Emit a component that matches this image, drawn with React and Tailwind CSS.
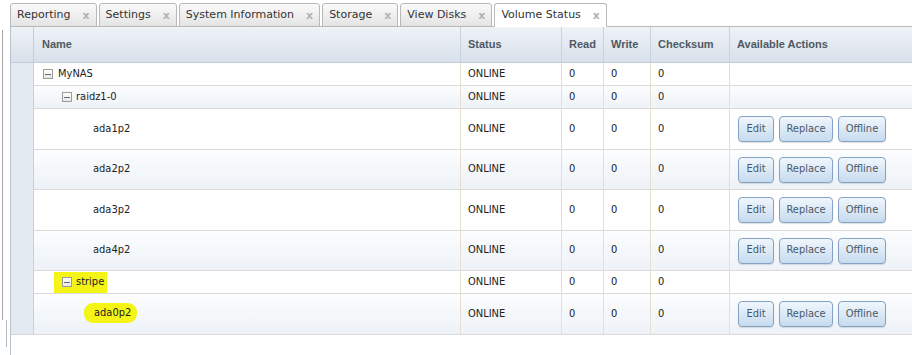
import React from 'react';

const TABS = ['Reporting', 'Settings', 'System Information', 'Storage', 'View Disks', 'Volume Status'];

const BODY_FONT = { fontFamily: '"DejaVu Sans Condensed", "Liberation Sans", sans-serif' };

// h = row height, level = tree depth, group = has expander
const ROWS = [
  { name: 'MyNAS', level: 0, group: true, h: 'h-[23px]' },
  { name: 'raidz1-0', level: 1, group: true, h: 'h-[23px]' },
  { name: 'ada1p2', level: 2, h: 'h-[41px]', actions: true },
  { name: 'ada2p2', level: 2, h: 'h-[40px]', actions: true },
  { name: 'ada3p2', level: 2, h: 'h-[41px]', actions: true },
  { name: 'ada4p2', level: 2, h: 'h-[40px]', actions: true },
  { name: 'stripe', level: 1, group: true, h: 'h-[23px]', mark: 'box' },
  { name: 'ada0p2', level: 2, h: 'h-[41px]', actions: true, mark: 'blob' },
];

const COLS = 'grid grid-cols-[23px_427px_101px_42px_47px_79px_1fr]';

function Tab({ label, active }) {
  return (
    <div
      className={`flex items-center h-[24px] -mb-px pl-[6px] pr-[6px] border border-[#b8b8b8] rounded-t-[3px] ${
        active ? 'bg-white border-b-white' : 'bg-linear-to-b from-[#fafafa] to-[#e4e4e4]'
      }`}
    >
      <span className="text-[11px] text-[#333]" style={{ fontFamily: '"DejaVu Sans", Verdana, sans-serif' }}>
        {label}
      </span>
      <span className="ml-[12px] text-[11px] font-bold leading-none text-[#b3b3b3]" style={{ fontFamily: '"DejaVu Sans", sans-serif' }}>
        x
      </span>
    </div>
  );
}

function Expander() {
  return (
    <span className="w-[10px] h-[10px] shrink-0 border border-[#9c9c9c] bg-linear-to-b from-white to-[#e6e6e6] flex items-center justify-center">
      <span className="w-[6px] h-px bg-[#6a6a6a]" />
    </span>
  );
}

function NameCell({ row }) {
  if (row.mark === 'box') {
    return (
      <span className="ml-[20px] pl-[8px] pr-[3px] h-[21px] bg-[#f4f416] flex items-center gap-[4px]">
        <Expander />
        <span>{row.name}</span>
      </span>
    );
  }
  if (row.mark === 'blob') {
    return (
      <span className="ml-[50px] pl-[10px] pr-[6px] h-[20px] mt-[-2px] rounded-[9px] bg-[#f4f416] flex items-center">
        {row.name}
      </span>
    );
  }
  if (row.group) {
    return (
      <span className={`flex items-center ${row.level === 0 ? 'pl-[9px] gap-[5px]' : 'pl-[28px] gap-[4px]'}`}>
        <Expander />
        <span>{row.name}</span>
      </span>
    );
  }
  return <span className="pl-[59px]">{row.name}</span>;
}

function ActionButton({ label, w }) {
  return (
    <button
      type="button"
      className={`${w} h-[26px] rounded-[4px] border border-[#84a3c4] bg-linear-to-b from-[#f0f6fc] to-[#c7dbef] text-[11px] text-[#4a5a6b] shadow-[0_1px_1px_rgba(0,0,0,0.12)]`}
    >
      {label}
    </button>
  );
}

export default function App() {
  const cell = 'flex items-center border-r border-r-[#e6decf] border-b border-b-[#dadada] min-w-0';
  const head = 'flex items-center border-r border-[#cad3dd] pl-[7px]';

  return (
    <div className="w-[912px] h-[355px] overflow-hidden bg-white flex" style={BODY_FONT}>
      {/* bord du panneau gauche */}
      <div className="w-[10px] shrink-0 flex flex-col">
        <div className="ml-[2px] mt-[30px] h-[290px] border-l border-[#a8a8a8]" />
        <div className="ml-[6px] h-[27px] border-l border-[#b8b8b8]" />
      </div>

      <div className="flex-1 flex flex-col min-w-0">
        <div className="h-[27px] flex items-end gap-[2px] border-b border-[#b8b8b8]">
          {TABS.map((t) => (
            <Tab key={t} label={t} active={t === 'Volume Status'} />
          ))}
        </div>

        <div className="flex-1 border-l border-[#b7c3cf]">
          <div
            className={`${COLS} h-[36px] bg-linear-to-b from-[#eff3f7] to-[#d7e0e9] border-b border-[#c3cdd8] text-[11px] font-bold text-[#4f5964]`}
            style={{ fontFamily: '"Liberation Sans", Arial, sans-serif' }}
          >
            <div className="border-r border-[#c3cdd8]" />
            <div className={`${head} pl-[8px]`}>Name</div>
            <div className={head}>Status</div>
            <div className={head}>Read</div>
            <div className={head}>Write</div>
            <div className={head}>Checksum</div>
            <div className="flex items-center pl-[7px]">Available Actions</div>
          </div>

          {ROWS.map((row, i) => {
            const odd = i % 2 === 1;
            const last = i === ROWS.length - 1;
            return (
              <div
                key={row.name}
                className={`${COLS} ${row.h} text-[11px] text-[#222] ${
                  odd ? 'bg-linear-to-b from-[#fcfdfe] to-[#edf2f7]' : 'bg-white'
                }`}
              >
                <div className={`bg-[#e3eaf2] border-r border-r-[#c6d1dc] ${last ? 'border-b border-b-[#d2d8de]' : ''}`} />
                <div className={cell}>
                  <NameCell row={row} />
                </div>
                <div className={`${cell} pl-[7px]`}>ONLINE</div>
                <div className={`${cell} pl-[7px]`}>0</div>
                <div className={`${cell} pl-[7px]`}>0</div>
                <div className={`${cell} pl-[7px]`}>0</div>
                <div className="flex items-center gap-[5px] pl-[8px] border-b border-b-[#dadada]">
                  {row.actions && (
                    <>
                      <ActionButton label="Edit" w="w-[36px]" />
                      <ActionButton label="Replace" w="w-[54px]" />
                      <ActionButton label="Offline" w="w-[48px]" />
                    </>
                  )}
                </div>
              </div>
            );
          })}
        </div>
      </div>
    </div>
  );
}
